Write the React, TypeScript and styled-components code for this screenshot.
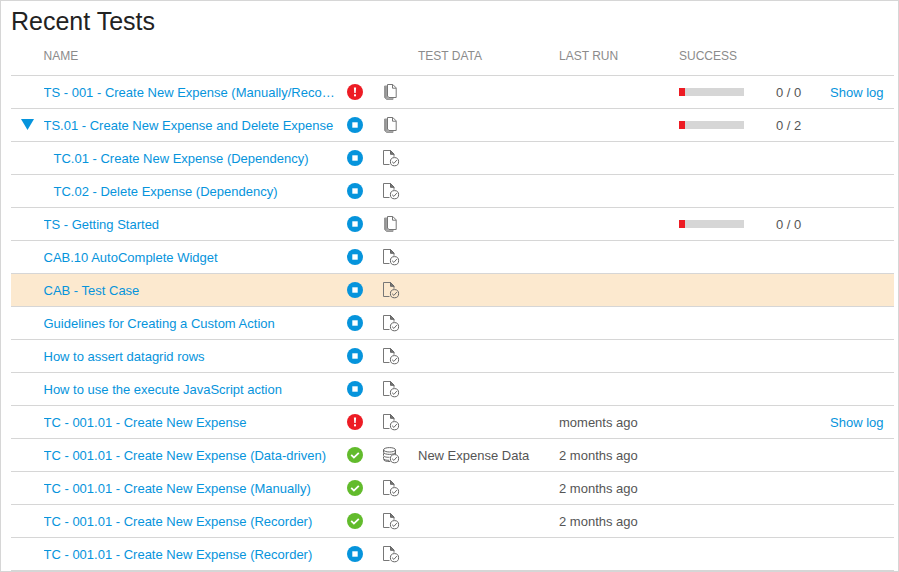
import React from "react";
import styled, { createGlobalStyle } from "styled-components";

const GlobalStyle = createGlobalStyle`
  * { box-sizing: border-box; }
  body { margin: 0; background: #fff; font-family: "Liberation Sans", Arial, sans-serif; }
`;

const Panel = styled.main`
  width: 899px;
  height: 572px;
  padding: 0 4px 0 10px;
  border: 1px solid #d6d6d6;
  overflow: hidden;
`;

const Title = styled.h1`
  margin: 0;
  height: 40px;
  font-size: 25px;
  font-weight: 400;
  line-height: 40px;
  color: #222;
`;

const Row = styled.div<{ $active?: boolean }>`
  display: grid;
  grid-template-columns: 32.5px 303.5px 36px 35px 141px 120px 97px 54px 64px;
  align-items: center;
  height: 33px;
  border-bottom: 1px solid #d6d6d6;
  background: ${(p) => (p.$active ? "#fce9cf" : "transparent")};
  font-size: 13px;
  white-space: nowrap;
  color: #555;
`;

const HeaderRow = styled(Row)`
  height: 35px;
  padding-bottom: 6px;
  font-size: 12px;
  color: #8b8b8b;
`;

const Cell = styled.div`
  line-height: 18px;
  padding-top: 1px;
`;

const IconCell = styled.div`
  display: flex;
  align-items: center;
`;

const Toggle = styled(IconCell)`
  padding: 0 0 1px 10px;
`;

const Text = styled.div`
  padding-top: 2px;
  line-height: 16px;
`;

const Name = styled.a<{ $child?: boolean }>`
  width: 292px;
  padding-top: 2px;
  padding-left: ${(p) => (p.$child ? 10 : 0)}px;
  overflow: hidden;
  text-overflow: ellipsis;
  line-height: 16px;
  color: #0694dc;
`;

const LogLink = styled.a`
  padding-top: 2px;
  line-height: 16px;
  color: #0694dc;
`;

const Track = styled.div`
  width: 65px;
  height: 8px;
  background: #d6d6d6;
`;

const Fill = styled.div`
  width: 6px;
  height: 8px;
  background: #ed1c24;
`;

type Status = "error" | "stopped" | "passed";
type Kind = "list" | "test" | "data";

const statusColor: Record<Status, string> = {
  error: "#ed1c24",
  stopped: "#0694dc",
  passed: "#62bb2c",
};

const StatusIcon = ({ status }: { status: Status }) => (
  <svg width="16" height="16" viewBox="0 0 16 16">
    <circle cx="8" cy="8" r="8" fill={statusColor[status]} />
    {status === "error" && (
      <g fill="#fff">
        <path d="M6.9 3.5h2.2l-.4 5.6H7.3z" />
        <rect x="7" y="10.3" width="2" height="2" />
      </g>
    )}
    {status === "stopped" && <rect x="5.3" y="5.3" width="5.4" height="5.4" fill="#fff" />}
    {status === "passed" && (
      <path d="M4.2 7.9l2.7 2.7 4.9-4.8" fill="none" stroke="#fff" strokeWidth="1.8" />
    )}
  </svg>
);

const CheckBadge = () => (
  <>
    <circle cx="11.5" cy="11.7" r="4.1" />
    <path d="M9.1 11.7l1.8 1.7 2.9-3.3" />
  </>
);

const KindIcon = ({ kind }: { kind: Kind }) => (
  <svg width="17" height="17" viewBox="0 0 17 17" fill="none" stroke="#666" strokeWidth="1">
    {kind === "list" && (
      <>
        <path d="M4.5 2H1.5v11.5l2 2h6.5v-2.5" fill="#a8a8a8" stroke="#999" />
        <path d="M2.8 2.5v11.5" stroke="#8c8c8c" />
        <path d="M4.5.5h5.3l3.4 3.4v9.6H6l-1.5-1.5z" fill="#fff" stroke="#777" />
        <path d="M9.5.7v3.5h3.5" stroke="#777" />
      </>
    )}
    {kind === "test" && (
      <>
        <path d="M6.5 14.5h-6V.5h7l3.5 3.6v2.7" stroke="#777" />
        <path d="M7.5.5v3.8H11z" fill="#777" />
        <CheckBadge />
      </>
    )}
    {kind === "data" && (
      <>
        <ellipse cx="6.5" cy="2.8" rx="6" ry="2.2" />
        <path d="M.5 2.8v2.4c0 2.9 12 2.9 12 0V2.8M.5 6.3v2c0 1.5 2.8 2.1 6 2M12.5 5v2.3M.5 9.6v1.7c0 1.5 2.5 2 5.8 2M.5 12.4c.4 1.6 2.8 2.1 6.8 2.1" />
        <CheckBadge />
      </>
    )}
  </svg>
);

interface Test {
  name: string;
  status: Status;
  kind: Kind;
  expanded?: boolean;
  child?: boolean;
  active?: boolean;
  data?: string;
  lastRun?: string;
  success?: string;
  log?: boolean;
}

const tests: Test[] = [
  { name: "TS - 001 - Create New Expense (Manually/Reco…", status: "error", kind: "list", success: "0 / 0", log: true },
  { name: "TS.01 - Create New Expense and Delete Expense", status: "stopped", kind: "list", expanded: true, success: "0 / 2" },
  { name: "TC.01 - Create New Expense (Dependency)", status: "stopped", kind: "test", child: true },
  { name: "TC.02 - Delete Expense (Dependency)", status: "stopped", kind: "test", child: true },
  { name: "TS - Getting Started", status: "stopped", kind: "list", success: "0 / 0" },
  { name: "CAB.10 AutoComplete Widget", status: "stopped", kind: "test" },
  { name: "CAB - Test Case", status: "stopped", kind: "test", active: true },
  { name: "Guidelines for Creating a Custom Action", status: "stopped", kind: "test" },
  { name: "How to assert datagrid rows", status: "stopped", kind: "test" },
  { name: "How to use the execute JavaScript action", status: "stopped", kind: "test" },
  { name: "TC - 001.01 - Create New Expense", status: "error", kind: "test", lastRun: "moments ago", log: true },
  { name: "TC - 001.01 - Create New Expense (Data-driven)", status: "passed", kind: "data", data: "New Expense Data", lastRun: "2 months ago" },
  { name: "TC - 001.01 - Create New Expense (Manually)", status: "passed", kind: "test", lastRun: "2 months ago" },
  { name: "TC - 001.01 - Create New Expense (Recorder)", status: "passed", kind: "test", lastRun: "2 months ago" },
  { name: "TC - 001.01 - Create New Expense (Recorder)", status: "stopped", kind: "test" },
];

const TestRow = ({ test }: { test: Test }) => (
  <Row $active={test.active}>
    <Toggle>
      {test.expanded && (
        <svg width="13" height="11" viewBox="0 0 13 11">
          <path d="M0 0h13L6.5 11z" fill="#0694dc" />
        </svg>
      )}
    </Toggle>
    <Name $child={test.child}>{test.name}</Name>
    <IconCell><StatusIcon status={test.status} /></IconCell>
    <IconCell><KindIcon kind={test.kind} /></IconCell>
    <Text>{test.data}</Text>
    <Text>{test.lastRun}</Text>
    <IconCell>{test.success && <Track><Fill /></Track>}</IconCell>
    <Text>{test.success}</Text>
    {test.log && <LogLink>Show log</LogLink>}
  </Row>
);

export default function App() {
  return (
    <>
      <GlobalStyle />
      <Panel>
        <Title>Recent Tests</Title>
        <HeaderRow>
          <Cell />
          <Cell>NAME</Cell>
          <Cell />
          <Cell />
          <Cell>TEST DATA</Cell>
          <Cell>LAST RUN</Cell>
          <Cell>SUCCESS</Cell>
        </HeaderRow>
        {tests.map((test, i) => <TestRow key={i} test={test} />)}
      </Panel>
    </>
  );
}
